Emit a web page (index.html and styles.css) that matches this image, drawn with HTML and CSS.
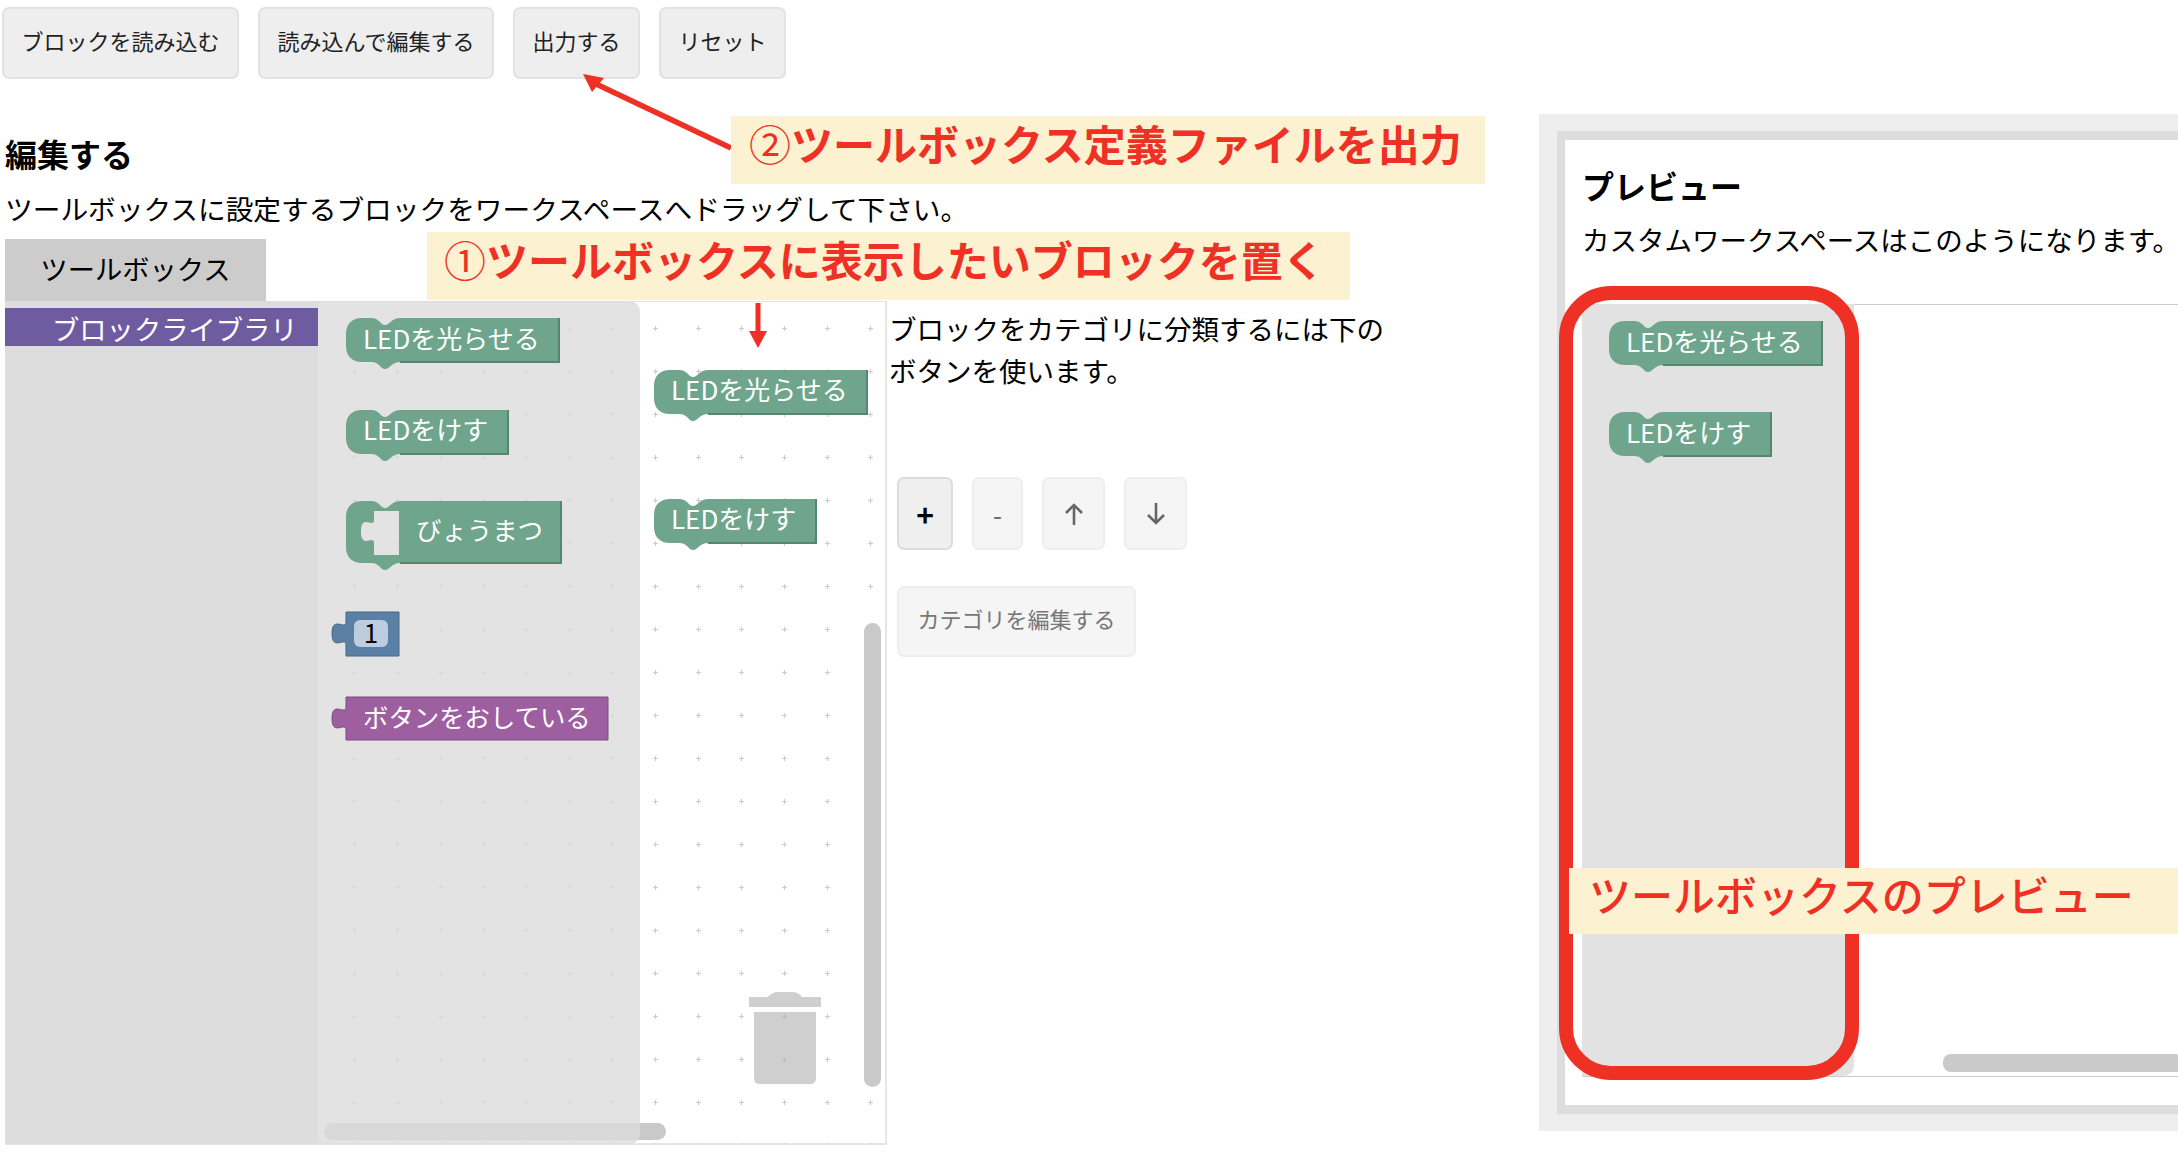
FILE: index.html
```html
<!DOCTYPE html>
<html>

<head>
  <meta charset="UTF-8">
  <title>ツールボックスの編集</title>
  <link rel="stylesheet" href="styles.css">
</head>

<body>
  <div class="page">
    <div class="left">
      <div class="toolbar">
        <button class="btn">ブロックを読み込む</button>
        <button class="btn">読み込んで編集する</button>
        <button class="btn">出力する</button>
        <button class="btn">リセット</button>
      </div>
      <div class="edit">
        <h2 class="title">編集する</h2>
        <p class="lead">ツールボックスに設定するブロックをワークスペースへドラッグして下さい。</p>
        <div class="tab">ツールボックス</div>
        <div class="editor">
          <svg class="blockly" width="882" height="844" viewBox="0 0 882 844">
            <defs>
              <pattern id="grid" width="43" height="43" patternUnits="userSpaceOnUse" x="3" y="25">
                <path d="M0 2.5H5M2.5 0V5" stroke="#ccc" stroke-width="1.2" fill="none" />
              </pattern>
            </defs>
            <rect class="canvas" x="0" y="0" width="881" height="843" />
            <rect x="0" y="0" width="881" height="843" fill="url(#grid)" />

            <path class="trash" d="M744 696H763Q767 691 773 691H787Q793 691 797 696H816V706H744ZM749 711H811V777Q811 783 805 783H755Q749 783 749 777Z" />
            <rect class="bar" x="859" y="322" width="17" height="464" rx="8.5" />
            <rect class="bar" x="319" y="822" width="342" height="17" rx="8.5" />

            <rect class="side" x="0" y="0" width="313" height="843" />
            <path class="flyout" d="M313 0H623Q635 0 635 12V831Q635 843 623 843H313Z" />

            <rect class="cat" x="0" y="7" width="313" height="38" />
            <text class="cat-text" x="47" y="39">ブロックライブラリ</text>

            <g transform="translate(341 17)">
              <path class="green" d="M0 16C0 6 6 0 16 0H26Q30 0 33 3L36 6Q39 8 42 6L47 2Q50 0 54 0H213V44H54Q50 44 47 46L42 50Q39 52 36 50L33 47Q30 44 26 44H16C6 44 0 38 0 28Z" />
              <path class="green-line" d="M213 0V44H54" />
              <text class="label" x="17" y="31">LEDを光らせる</text>
            </g>
            <g transform="translate(341 109)">
              <path class="green" d="M0 16C0 6 6 0 16 0H26Q30 0 33 3L36 6Q39 8 42 6L47 2Q50 0 54 0H162V44H54Q50 44 47 46L42 50Q39 52 36 50L33 47Q30 44 26 44H16C6 44 0 38 0 28Z" />
              <path class="green-line" d="M162 0V44H54" />
              <text class="label" x="17" y="30">LEDをけす</text>
            </g>
            <g transform="translate(341 200)">
              <path class="green" fill-rule="evenodd" d="M0 16C0 6 6 0 16 0H26Q30 0 33 3L36 6Q39 8 42 6L47 2Q50 0 54 0H215V62H54Q50 62 47 64L42 68Q39 70 36 68L33 65Q30 62 26 62H16C6 62 0 56 0 46ZM28 10V19c0 9 -13 -7 -13 11.5s13 2.3 13 11.5V54H53V10Z" />
              <path class="green-line" d="M215 0V62H54" />
              <text class="label label-kana" x="70" y="39">びょうまつ</text>
            </g>
            <g transform="translate(341 311)">
              <path class="blue" d="M0 0V10c0 9 -14 -7 -14 11.5s14 2.3 14 11.5V44H53V0Z" />
              <rect class="field" x="8" y="8" width="34" height="27" rx="6" />
              <text class="num" x="25" y="31">1</text>
            </g>
            <g transform="translate(341 396)">
              <path class="purple" d="M0 0V10c0 9 -14 -7 -14 11.5s14 2.3 14 11.5V43H262V0Z" />
              <text class="label label-kana" x="17" y="30">ボタンをおしている</text>
            </g>

            <g transform="translate(649 69)">
              <path class="green" d="M0 16C0 6 6 0 16 0H26Q30 0 33 3L36 6Q39 8 42 6L47 2Q50 0 54 0H213V44H54Q50 44 47 46L42 50Q39 52 36 50L33 47Q30 44 26 44H16C6 44 0 38 0 28Z" />
              <path class="green-line" d="M213 0V44H54" />
              <text class="label" x="17" y="30">LEDを光らせる</text>
            </g>
            <g transform="translate(649 198)">
              <path class="green" d="M0 16C0 6 6 0 16 0H26Q30 0 33 3L36 6Q39 8 42 6L47 2Q50 0 54 0H162V44H54Q50 44 47 46L42 50Q39 52 36 50L33 47Q30 44 26 44H16C6 44 0 38 0 28Z" />
              <path class="green-line" d="M162 0V44H54" />
              <text class="label" x="17" y="30">LEDをけす</text>
            </g>
          </svg>
          <div class="side-panel">
            <p class="hint">ブロックをカテゴリに分類するには下の<br>ボタンを使います。</p>
            <div class="tools">
              <button class="tool tool-on">+</button>
              <button class="tool tool-minus">-</button>
              <button class="tool tool-arrow">
                <svg width="20" height="24" viewBox="0 0 20 24"><path d="M10 3V23M2 11L10 3L18 11" /></svg>
              </button>
              <button class="tool tool-arrow">
                <svg width="20" height="24" viewBox="0 0 20 24"><path d="M10 1V21M2 13L10 21L18 13" /></svg>
              </button>
            </div>
            <button class="tool tool-wide">カテゴリを編集する</button>
          </div>
        </div>
      </div>
    </div>

    <div class="preview">
      <div class="preview-in">
        <div class="preview-body">
          <h2 class="title preview-title">プレビュー</h2>
          <p class="lead preview-lead">カスタムワークスペースはこのようになります。</p>
          <svg class="mini" width="596" height="773" viewBox="0 0 596 773">
            <path class="frame-line" d="M596 0.5H0.5V772.5H596" />
            <rect class="bar" x="361" y="750" width="240" height="18" rx="8" />
            <path class="flyout-solid" d="M0 0H272V760Q272 772 260 772H0Z" />
            <g transform="translate(27 17)">
              <path class="green" d="M0 16C0 6 6 0 16 0H26Q30 0 33 3L36 6Q39 8 42 6L47 2Q50 0 54 0H213V44H54Q50 44 47 46L42 50Q39 52 36 50L33 47Q30 44 26 44H16C6 44 0 38 0 28Z" />
              <path class="green-line" d="M213 0V44H54" />
              <text class="label" x="17" y="31">LEDを光らせる</text>
            </g>
            <g transform="translate(27 108)">
              <path class="green" d="M0 16C0 6 6 0 16 0H26Q30 0 33 3L36 6Q39 8 42 6L47 2Q50 0 54 0H162V44H54Q50 44 47 46L42 50Q39 52 36 50L33 47Q30 44 26 44H16C6 44 0 38 0 28Z" />
              <path class="green-line" d="M162 0V44H54" />
              <text class="label" x="17" y="31">LEDをけす</text>
            </g>
          </svg>
        </div>
      </div>
    </div>
  </div>

  <!-- 説明の注釈 -->
  <svg class="arrows" width="2178" height="1156" viewBox="0 0 2178 1156">
    <path d="M731 148L594 83" stroke="#ee3124" stroke-width="5.5" fill="none" />
    <path d="M583 74L604 78L592 92Z" fill="#ee3124" />
    <path d="M758 303V333" stroke="#ee3124" stroke-width="5" fill="none" />
    <path d="M749 331H767L758 348Z" fill="#ee3124" />
  </svg>
  <div class="ring"></div>
  <div class="note note-one"><span class="mark">①</span>ツールボックスに表示したいブロックを置く</div>
  <div class="note note-two"><span class="mark">②</span>ツールボックス定義ファイルを出力</div>
  <div class="note note-three">ツールボックスのプレビュー</div>
</body>

</html>
```

FILE: styles.css
```css
* {
  box-sizing: border-box;
}

body {
  margin: 0;
  width: 2178px;
  height: 1156px;
  overflow: hidden;
  position: relative;
  background-color: white;
  color: black;
  font-family: "Noto Sans CJK JP", "Noto Sans", sans-serif;
}

.page {
  display: flex;
  height: 100%;
}

.left {
  width: 1539px;
  flex: none;
}

.toolbar {
  display: flex;
  gap: 19px;
  padding: 7px 0 0 2px;
}

.btn {
  height: 72px;
  padding: 0 17.5px 6px;
  background-color: #eee;
  border: 2px solid #e2e2e2;
  border-radius: 7px;
  color: #222;
  font-family: inherit;
  font-size: 22px;
}

.edit {
  padding: 54px 0 0 5px;
}

.title {
  margin: 0;
  font-size: 32px;
  line-height: 40px;
  font-weight: bold;
}

.lead {
  margin: 14px 0 10px;
  font-size: 27.7px;
  line-height: 42px;
  white-space: nowrap;
}

.tab {
  width: 261px;
  height: 62px;
  background-color: #ccc;
  font-size: 27.3px;
  line-height: 58px;
  text-align: center;
}

.editor {
  display: flex;
}

.blockly {
  display: block;
  flex: none;
}

.canvas {
  fill: white;
  stroke: #ccc;
  stroke-width: 1;
}

.side {
  fill: #ddd;
}

.flyout {
  fill: #dcdcdc;
  opacity: 0.8;
}

.flyout-solid {
  fill: #e2e2e2;
}

.bar {
  fill: #c9c9c9;
}

.trash {
  fill: #b5b5b5;
  opacity: 0.65;
}

.cat {
  fill: #6f5ca0;
}

.cat-text {
  fill: white;
  font-size: 27.3px;
}

.green {
  fill: #6ea58c;
}

.green-line {
  fill: none;
  stroke: #568571;
  stroke-width: 2;
}

.blue {
  fill: #5b80a5;
  stroke: #496684;
  stroke-width: 1;
}

.purple {
  fill: #9d5fa0;
  stroke: #7e4c80;
  stroke-width: 1;
}

.field {
  fill: #bdccdf;
}

.label {
  fill: white;
  font-size: 26px;
}

.label-kana {
  font-size: 25.4px;
}

.num {
  fill: black;
  font-size: 26px;
  text-anchor: middle;
}

.side-panel {
  padding: 6px 0 0 2px;
}

.hint {
  margin: 0;
  font-size: 27.5px;
  line-height: 42px;
  white-space: nowrap;
}

.tools {
  display: flex;
  gap: 19px;
  margin: 86px 0 36px 8px;
}

.tool {
  height: 73px;
  padding: 0;
  background-color: #f5f5f5;
  border: 2px solid #eee;
  border-radius: 7px;
  color: #666;
  font-family: inherit;
  font-size: 26px;
}

.tool-on {
  width: 56px;
  background-color: #efefef;
  border-color: #ddd;
  color: black;
  font-weight: bold;
  font-size: 30px;
}

.tool-minus {
  width: 51px;
}

.tool-arrow {
  width: 63px;
}

.tool-arrow svg {
  display: block;
  margin: 0 auto;
}

.tool-arrow path {
  fill: none;
  stroke: #666;
  stroke-width: 2.6;
}

.tool-wide {
  display: block;
  margin-left: 8px;
  width: 239px;
  height: 71px;
  padding-bottom: 8px;
  color: #777;
  font-size: 22px;
}

.preview {
  flex: 1;
  min-width: 0;
  height: 1017px;
  margin-top: 114px;
  padding: 17px 0 17px 18px;
  background-color: #eee;
  overflow: hidden;
}

.preview-in {
  height: 100%;
  padding: 9px 0 9px 8px;
  background-color: #ddd;
}

.preview-body {
  height: 100%;
  padding: 25px 0 0 17px;
  background-color: white;
}

.preview-title {
  line-height: 40px;
}

.preview-lead {
  margin: 13px 0 44px;
  font-size: 27.5px;
}

.frame-line {
  fill: none;
  stroke: #ccc;
  stroke-width: 1;
}

.mini {
  display: block;
}

.arrows {
  position: absolute;
  left: 0;
  top: 0;
  pointer-events: none;
}

.ring {
  position: absolute;
  left: 1559px;
  top: 286px;
  width: 300px;
  height: 794px;
  border: 14px solid #ee3124;
  border-radius: 52px;
}

.note {
  position: absolute;
  display: flex;
  align-items: center;
  padding-bottom: 14px;
  background-color: #fcf1d0;
  color: #ee3124;
  font-size: 42px;
  line-height: 42px;
  font-weight: bold;
  white-space: nowrap;
}

.mark {
  font-weight: normal;
}

.note-one {
  left: 427px;
  top: 232px;
  width: 923px;
  height: 68px;
  padding-left: 17px;
}

.note-two {
  left: 731px;
  top: 116px;
  width: 754px;
  height: 68px;
  padding-left: 18px;
}

.note-three {
  left: 1569px;
  top: 868px;
  width: 609px;
  height: 66px;
  padding-left: 20px;
  font-weight: 500;
}
```
